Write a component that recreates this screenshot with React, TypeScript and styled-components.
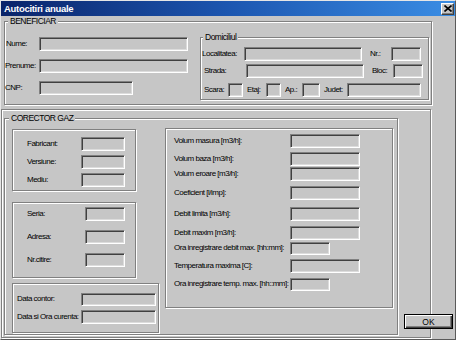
import React from "react";
import styled, { createGlobalStyle } from "styled-components";

const BG = "#c6c6c6";

const GlobalStyle = createGlobalStyle`
  html, body {
    margin: 0;
    padding: 0;
    background: ${BG};
  }
  body {
    width: 456px;
    height: 340px;
    overflow: hidden;
    font-family: "Liberation Sans", Arial, sans-serif;
    font-size: 8px;
    letter-spacing: -0.5px;
    color: #000;
  }
`;

const Window = styled.div`
  box-sizing: border-box;
  width: 456px;
  height: 340px;
  background: ${BG};
  border-top: 1px solid #e6e6e6;
  border-left: 1px solid #e6e6e6;
  border-right: 1px solid #5a5a5a;
  border-bottom: 1px solid #5a5a5a;
  display: flex;
  flex-direction: column;
`;

const TitleBar = styled.div`
  height: 15px;
  flex-shrink: 0;
  display: flex;
  align-items: center;
  justify-content: space-between;
  padding: 0 1px 0 3px;
  background: linear-gradient(90deg, #0a246a 0%, #1c56b0 50%, #3a8de4 100%);
`;

const Title = styled.span`
  color: #fff;
  font-weight: bold;
  font-size: 9.5px;
  letter-spacing: -0.3px;
`;

const CloseButton = styled.button`
  box-sizing: border-box;
  width: 13px;
  height: 12px;
  padding: 0;
  margin: 0;
  display: flex;
  align-items: center;
  justify-content: center;
  background: ${BG};
  border-top: 1px solid #fff;
  border-left: 1px solid #fff;
  border-right: 1px solid #404040;
  border-bottom: 1px solid #404040;
  box-shadow: inset -1px -1px 0 #808080;
`;

const Body = styled.div`
  display: flex;
  flex-direction: column;
  align-items: flex-start;
`;

const GroupBox = styled.fieldset<{ $w: number; $h: number; $ml?: number; $mt?: number }>`
  box-sizing: border-box;
  flex-shrink: 0;
  margin: ${(p) => p.$mt ?? 0}px 0 0 ${(p) => p.$ml ?? 0}px;
  padding: 0;
  min-width: 0;
  width: ${(p) => p.$w}px;
  height: ${(p) => p.$h}px;
  border: 1px solid #808080;
  box-shadow: inset 1px 1px 0 #fff, 1px 1px 0 #fff;
`;

const Caption = styled.legend<{ $ml?: number }>`
  margin-left: ${(p) => p.$ml ?? 3}px;
  padding: 0 2px;
  height: 10px;
  line-height: 10px;
  font-size: 8.5px;
  background: ${BG};
`;

const Frame = styled.div<{ $w: number; $h: number; $mt?: number; $ml?: number }>`
  box-sizing: border-box;
  flex-shrink: 0;
  width: ${(p) => p.$w}px;
  height: ${(p) => p.$h}px;
  margin: ${(p) => p.$mt ?? 0}px 0 0 ${(p) => p.$ml ?? 0}px;
  border: 1px solid #808080;
  box-shadow: inset 1px 1px 0 #fff, 1px 1px 0 #fff;
  display: flex;
  flex-direction: column;
`;

const Panel = styled.div`
  box-sizing: border-box;
  width: 430px;
  height: 229px;
  margin-top: 4px;
  padding: 3px 0 0 2px;
  border: 1px solid #808080;
  box-shadow: inset 1px 1px 0 #fff, 1px 1px 0 #fff;
  display: flex;
  align-items: flex-start;
`;

const Row = styled.div<{ $mt?: number; $pl?: number; $gap?: number }>`
  display: flex;
  align-items: center;
  height: 14px;
  margin-top: ${(p) => p.$mt ?? 0}px;
  padding-left: ${(p) => p.$pl ?? 0}px;
  gap: ${(p) => p.$gap ?? 0}px;
`;

const Label = styled.label<{ $w: number; $ml?: number }>`
  flex-shrink: 0;
  width: ${(p) => p.$w}px;
  margin-left: ${(p) => p.$ml ?? 0}px;
  white-space: nowrap;
  line-height: 10px;
`;

const Field = styled.input<{ $w: number; $h?: number }>`
  box-sizing: border-box;
  flex-shrink: 0;
  width: ${(p) => p.$w}px;
  height: ${(p) => p.$h ?? 14}px;
  margin: 0;
  padding: 0;
  font: inherit;
  background: ${BG};
  border-top: 1px solid #808080;
  border-left: 1px solid #808080;
  border-bottom: 1px solid #fff;
  border-right: 1px solid #fff;
  box-shadow: inset 1px 1px 0 #404040, inset -1px -1px 0 #dcdcdc;
  outline: none;
`;

const Column = styled.div<{ $w: number; $mt?: number; $ml?: number; $gap?: number }>`
  display: flex;
  flex-direction: column;
  flex-shrink: 0;
  width: ${(p) => p.$w}px;
  margin: ${(p) => p.$mt ?? 0}px 0 0 ${(p) => p.$ml ?? 0}px;
  gap: ${(p) => p.$gap ?? 0}px;
`;

const Split = styled.div`
  display: flex;
  align-items: flex-start;
`;

const OkButton = styled.button`
  box-sizing: border-box;
  flex-shrink: 0;
  align-self: flex-end;
  width: 49px;
  height: 15px;
  margin: 0 0 8px 6px;
  padding: 0;
  font: inherit;
  font-size: 8.5px;
  letter-spacing: 0;
  background: ${BG};
  border: 1px solid #000;
  box-shadow: inset 1px 1px 0 #fff, inset -1px -1px 0 #404040, inset -2px -2px 0 #808080;
  position: relative;
  z-index: 1;
`;

const volume = [
  { label: "Volum masura [m3/h]:", w: 70, mt: 5 },
  { label: "Volum baza [m3/h]:", w: 70, mt: 4 },
  { label: "Volum eroare [m3/h]:", w: 70, mt: 1 },
  { label: "Coeficient [l/imp]:", w: 70, mt: 5 },
  { label: "Debit limita [m3/h]:", w: 70, mt: 7 },
  { label: "Debit maxim [m3/h]:", w: 70, mt: 5 },
  { label: "Ora inregistrare debit max. [hh:mm]:", w: 40, h: 13, mt: 1 },
  { label: "Temperatura maxima [C]:", w: 70, mt: 4 },
  { label: "Ora inregistrare temp. max. [hh::mm]:", w: 40, h: 13, mt: 4 },
];

const CloseGlyph = () => (
  <svg width="8" height="7" viewBox="0 0 8 7">
    <path d="M0.5 0.5 L7.5 6.5 M7.5 0.5 L0.5 6.5" stroke="#000" strokeWidth="1.6" />
  </svg>
);

export default function App() {
  return (
    <>
      <GlobalStyle />
      <Window>
        <TitleBar>
          <Title>Autocitiri anuale</Title>
          <CloseButton aria-label="Close">
            <CloseGlyph />
          </CloseButton>
        </TitleBar>
        <Body>
          <GroupBox $w={428} $h={89} $ml={3}>
            <Caption>BENEFICIAR</Caption>
            <Split>
              <Column $w={195} $mt={11} $gap={8}>
                <Row $pl={1}>
                  <Label $w={33}>Nume:</Label>
                  <Field $w={149} readOnly />
                </Row>
                <Row>
                  <Label $w={34}>Prenume:</Label>
                  <Field $w={149} readOnly />
                </Row>
                <Row>
                  <Label $w={34}>CNP:</Label>
                  <Field $w={94} readOnly />
                </Row>
              </Column>
              <GroupBox $w={229} $h={68} $mt={6}>
                <Caption $ml={2}>Domiciliul</Caption>
                <Row $mt={5} $pl={1}>
                  <Label $w={42}>Localitatea:</Label>
                  <Field $w={118} readOnly />
                  <Label $w={21} $ml={8}>Nr.:</Label>
                  <Field $w={30} readOnly />
                </Row>
                <Row $mt={3} $pl={1}>
                  <Label $w={42} $ml={2}>Strada:</Label>
                  <Field $w={118} readOnly />
                  <Label $w={21} $ml={8}>Bloc:</Label>
                  <Field $w={30} readOnly />
                </Row>
                <Row $mt={5} $pl={3} $gap={4}>
                  <Label $w={20}>Scara:</Label>
                  <Field $w={15} readOnly />
                  <Label $w={15}>Etaj:</Label>
                  <Field $w={15} readOnly />
                  <Label $w={13}>Ap.:</Label>
                  <Field $w={18} readOnly />
                  <Label $w={19}>Judet:</Label>
                  <Field $w={74} readOnly />
                </Row>
              </GroupBox>
            </Split>
          </GroupBox>

          <Panel>
            <GroupBox $w={394} $h={222}>
              <Caption $ml={4}>CORECTOR GAZ</Caption>
              <Split>
                <Column $w={147} $mt={6} $ml={7}>
                  <Frame $w={124} $h={62}>
                    <Column $w={110} $mt={7} $ml={14} $gap={4}>
                      <Row>
                        <Label $w={54}>Fabricant:</Label>
                        <Field $w={44} readOnly />
                      </Row>
                      <Row>
                        <Label $w={54}>Versiune:</Label>
                        <Field $w={44} readOnly />
                      </Row>
                      <Row>
                        <Label $w={54}>Mediu:</Label>
                        <Field $w={44} readOnly />
                      </Row>
                    </Column>
                  </Frame>
                  <Frame $w={124} $h={76} $mt={11}>
                    <Column $w={110} $mt={4} $ml={14} $gap={9}>
                      <Row>
                        <Label $w={58}>Seria:</Label>
                        <Field $w={40} readOnly />
                      </Row>
                      <Row>
                        <Label $w={58}>Adresa:</Label>
                        <Field $w={40} readOnly />
                      </Row>
                      <Row>
                        <Label $w={58}>Nr.citire:</Label>
                        <Field $w={40} readOnly />
                      </Row>
                    </Column>
                  </Frame>
                  <Frame $w={147} $h={50} $mt={5}>
                    <Column $w={140} $mt={8} $ml={4} $gap={4}>
                      <Row>
                        <Label $w={64}>Data contor:</Label>
                        <Field $w={75} $h={13} readOnly />
                      </Row>
                      <Row>
                        <Label $w={64}>Data si Ora curenta:</Label>
                        <Field $w={75} readOnly />
                      </Row>
                    </Column>
                  </Frame>
                </Column>
                <Frame $w={228} $h={180} $mt={5} $ml={6}>
                  <Column $w={200} $ml={8}>
                    {volume.map((v) => (
                      <Row key={v.label} $mt={v.mt}>
                        <Label $w={116}>{v.label}</Label>
                        <Field $w={v.w} $h={v.h} readOnly />
                      </Row>
                    ))}
                  </Column>
                </Frame>
              </Split>
            </GroupBox>
            <OkButton>OK</OkButton>
          </Panel>
        </Body>
      </Window>
    </>
  );
}
